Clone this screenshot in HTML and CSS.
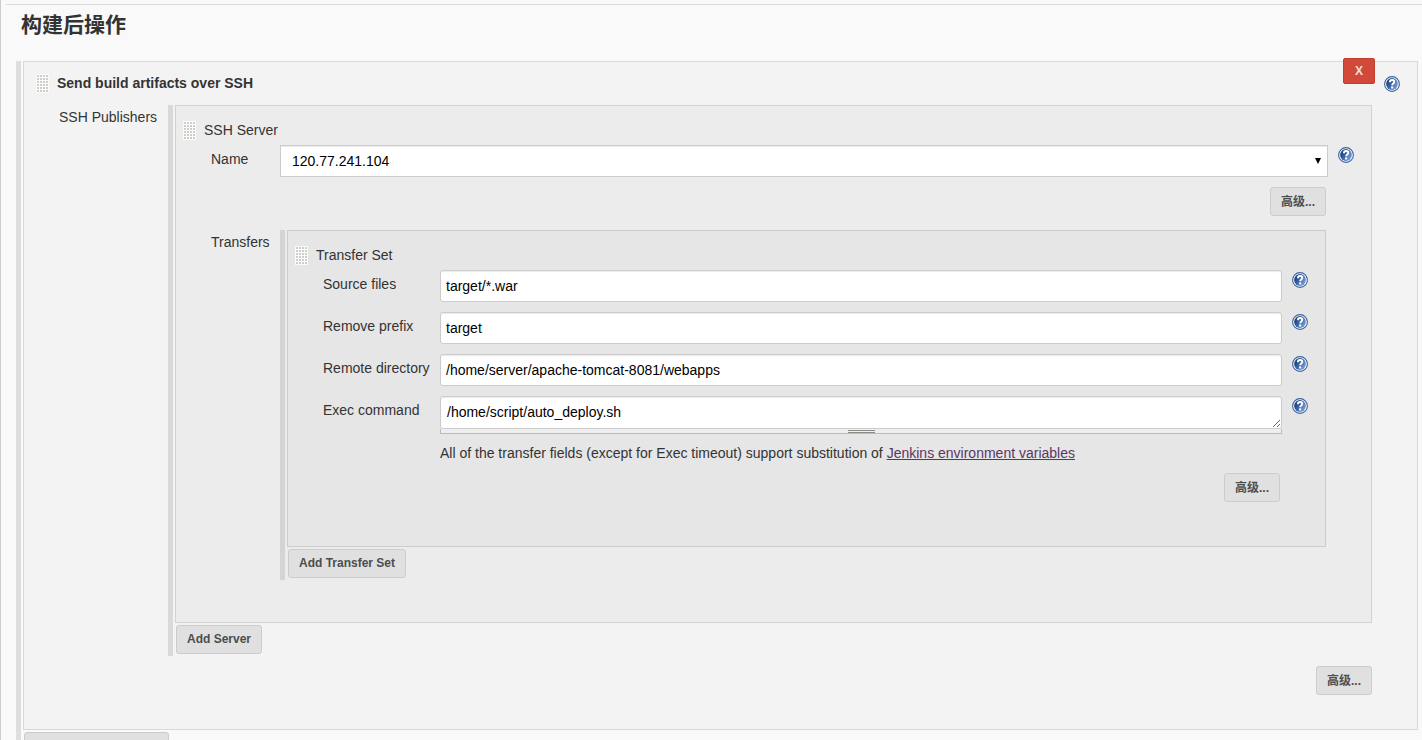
FILE: index.html
```html
<!DOCTYPE html>
<html lang="zh-CN">
<head>
<meta charset="utf-8">
<title>构建后操作</title>
<link rel="stylesheet" href="styles.css">
</head>
<body>
<svg class="defs" aria-hidden="true">
  <defs>
    <linearGradient id="ball" x1="0" y1="0.2" x2="1" y2="0.8">
      <stop offset="0.2" stop-color="#20498a"/>
      <stop offset="1" stop-color="#7fa6dc"/>
    </linearGradient>
    <symbol id="help" viewBox="0 0 16 16">
      <circle cx="8" cy="8" r="7.400" fill="#fff" stroke="#3a62a0" stroke-width="1.100"/>
      <circle cx="8" cy="8" r="5.900" fill="url(#ball)"/>
      <path d="M5.900 6.200C5.900 4.700 6.800 4 8.100 4c1.400 0 2.200.7 2.200 1.800 0 1.600-2.100 1.700-2.100 3.400" fill="none" stroke="#fff" stroke-width="1.900"/>
      <path d="M7.100 10.400h2.100v2.100h-2.100z" fill="#fff"/>
    </symbol>
  </defs>
</svg>
<main class="page">
  <hr class="divider">
  <h1 class="heading">构建后操作</h1>
  <section class="repeat">
    <div class="panel panel-outer">
      <button class="delete" type="button">X</button>
      <div class="title-row">
        <span class="grip"></span>
        <b class="title">Send build artifacts over SSH</b>
        <a class="help" href="#" aria-label="Help"><svg><use href="#help"/></svg></a>
      </div>
      <div class="row publishers">
        <span class="label">SSH Publishers</span>
        <div class="repeat repeat-mid">
          <div class="panel panel-mid">
            <div class="title-row">
              <span class="grip"></span>
              <span class="title">SSH Server</span>
            </div>
            <div class="fields fields-mid">
              <div class="row">
                <label class="label" for="server">Name</label>
                <div class="select-box">
                  <select class="control select" id="server"><option>120.77.241.104</option></select>
                </div>
                <a class="help" href="#" aria-label="Help"><svg><use href="#help"/></svg></a>
              </div>
              <div class="actions"><button class="button" type="button">高级...</button></div>
              <div class="row transfers">
                <span class="label">Transfers</span>
                <div class="repeat repeat-inner">
                  <div class="panel panel-inner">
                    <div class="title-row">
                      <span class="grip"></span>
                      <span class="title">Transfer Set</span>
                    </div>
                    <div class="fields fields-inner">
                      <div class="row">
                        <label class="label" for="source">Source files</label>
                        <input class="control" id="source" type="text" value="target/*.war">
                        <a class="help" href="#" aria-label="Help"><svg><use href="#help"/></svg></a>
                      </div>
                      <div class="row">
                        <label class="label" for="prefix">Remove prefix</label>
                        <input class="control" id="prefix" type="text" value="target">
                        <a class="help" href="#" aria-label="Help"><svg><use href="#help"/></svg></a>
                      </div>
                      <div class="row">
                        <label class="label" for="remote">Remote directory</label>
                        <input class="control" id="remote" type="text" value="/home/server/apache-tomcat-8081/webapps">
                        <a class="help" href="#" aria-label="Help"><svg><use href="#help"/></svg></a>
                      </div>
                      <div class="row">
                        <label class="label" for="exec">Exec command</label>
                        <div class="area-box">
                          <textarea class="control area" id="exec" rows="1">/home/script/auto_deploy.sh</textarea>
                          <div class="area-handle"><span class="area-grip"></span></div>
                        </div>
                        <a class="help" href="#" aria-label="Help"><svg><use href="#help"/></svg></a>
                      </div>
                      <p class="note">All of the transfer fields (except for Exec timeout) support substitution of <a class="link" href="#">Jenkins environment variables</a></p>
                      <div class="actions"><button class="button" type="button">高级...</button></div>
                    </div>
                  </div>
                  <button class="button add" type="button">Add Transfer Set</button>
                </div>
              </div>
            </div>
          </div>
          <button class="button add" type="button">Add Server</button>
        </div>
      </div>
      <div class="actions actions-outer"><button class="button" type="button">高级...</button></div>
    </div>
    <button class="button add add-step" type="button" aria-label="Add post-build action"></button>
  </section>
</main>
</body>
</html>
```

FILE: styles.css
```css
* {
  box-sizing: border-box;
}

body {
  margin: 0;
  background: #f9f9f9;
  color: #333;
  font: 14px/18px "Liberation Sans", Arial, "Noto Sans CJK SC", sans-serif;
}

.defs {
  position: absolute;
  width: 0;
  height: 0;
}

.page {
  height: 100vh;
  overflow: hidden;
  padding: 4px 4px 0 15px;
  border-left: 1px solid #ccc;
}

.divider {
  height: 1px;
  margin: 0 -4px 0 -10px;
  border: 0;
  background: #ddd;
}

.heading {
  margin: 5px 0 21px 5px;
  font-size: 21px;
  line-height: 30px;
  font-weight: bold;
}

.repeat {
  flex: 1;
  min-width: 0;
  padding-left: 2px;
  border-left: 5px solid #dedede;
}

.repeat-mid {
  padding-bottom: 2px;
  border-color: #d9d9d9;
}

.repeat-inner {
  padding-bottom: 2px;
  border-color: #d4d4d4;
}

.panel {
  position: relative;
  border: 1px solid #d9d9d9;
}

.panel-outer {
  padding: 12px 17px 34px 12px;
  background: #f3f3f3;
}

.panel-mid {
  padding: 15px 17px 42px 7px;
  border-color: #d2d2d2;
  background: #ececec;
}

.panel-inner {
  padding: 15px 17px 44px 7px;
  border-color: #ccc;
  background: #e6e6e6;
}

.title-row {
  display: flex;
  gap: 8px;
  height: 19px;
}

.title {
  flex: 1;
}

.grip {
  width: 13px;
  height: 19px;
  background:
    conic-gradient(from 270deg at 2px 2px, #cfcfca 90deg, transparent 0) 1px 1px / 3px 3px,
    #fbfbfb;
}

.help {
  flex: none;
  width: 16px;
  height: 16px;
  margin-top: 2px;
}

.help svg {
  display: block;
  width: 16px;
  height: 16px;
}

.delete {
  position: absolute;
  top: -4px;
  right: 42px;
  width: 32px;
  height: 26px;
  padding: 0;
  border: 1px solid #c03e2e;
  border-radius: 2px;
  background: #d24939;
  color: #f4dedb;
  font: bold 12px/24px "Liberation Sans", Arial, sans-serif;
}

.row {
  display: flex;
  align-items: flex-start;
}

.label {
  flex: none;
  padding-top: 5px;
}

.row .help {
  margin-left: 10px;
}

.publishers {
  margin: 12px 28px 0 23px;
}

.publishers > .label {
  width: 109px;
  padding-top: 3px;
}

.fields {
  display: flex;
  flex-direction: column;
  gap: 10px;
  padding: 5px 0 0 28px;
}

.fields-mid > .row > .label {
  width: 69px;
}

.fields-inner > .row > .label {
  width: 117px;
}

.transfers {
  margin: 4px 28px 0 0;
}

.transfers > .label {
  padding-top: 3px;
}

.control {
  flex: 1;
  display: block;
  min-width: 0;
  width: 100%;
  height: 32px;
  margin: 0;
  padding: 6px 5px;
  border: 1px solid #ccc;
  border-radius: 3px;
  background: #fff;
  box-shadow: inset 0 1px 1px #ececec;
  color: #000;
  font: inherit;
}

.select-box {
  position: relative;
  flex: 1;
}

.select-box::after {
  content: "";
  position: absolute;
  top: 13px;
  right: 7px;
  border: 3px solid transparent;
  border-top: 6px solid #000;
  border-bottom: 0;
  pointer-events: none;
}

.select {
  padding: 0 11px;
  border-radius: 0;
  appearance: none;
}

.area-box {
  flex: 1;
}

.area {
  height: 33px;
  padding: 6px;
  overflow: hidden;
  resize: vertical;
}

.area-handle {
  display: flex;
  justify-content: center;
  height: 5px;
  padding-top: 1px;
  border: 1px solid #bbb;
  border-top: 0;
  background: #eee;
}

.area-grip {
  width: 27px;
  height: 3px;
  border: solid #8c8c84;
  border-width: 1px 0;
}

.note {
  margin: 0 0 1px 117px;
}

.link {
  color: #5c3566;
}

.actions {
  display: flex;
  justify-content: flex-end;
  padding-right: 28px;
}

.button {
  height: 29px;
  padding: 0 10px 2px;
  border: 1px solid #ccc;
  border-radius: 3px;
  background: #e0e0e0;
  color: #4d4d4d;
  font: bold 12px/24px "Liberation Sans", Arial, "Noto Sans CJK SC", sans-serif;
}

.actions .button {
  padding-bottom: 0;
}

.add {
  display: block;
  margin: 2px 0 0 1px;
}

.actions-outer {
  margin-top: 10px;
}

.add-step {
  width: 145px;
}
```
